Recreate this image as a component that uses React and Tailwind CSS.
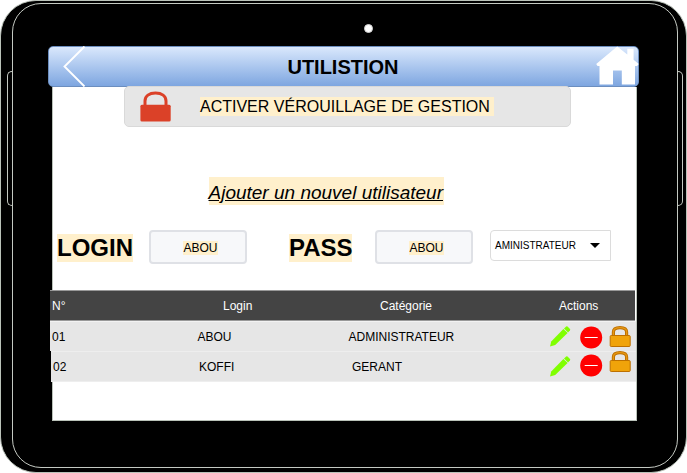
import React from "react";

function PadlockIcon() {
  return (
    <svg width="22" height="22" viewBox="0 0 22 22" className="block">
      <path d="M4.4 9V6C4.4 2.9 7 1.6 11 1.6S17.6 2.9 17.6 6V9" fill="none" stroke="#bd7000" strokeWidth="3.2" />
      <path d="M4.4 9V6.1C4.4 3 7 1.7 11 1.7S17.6 3 17.6 6.1V9" fill="none" stroke="#e69712" strokeWidth="1.3" />
      <rect x="1.2" y="9.5" width="20" height="11" rx="1" fill="#f0a30a" stroke="#bd7000" />
    </svg>
  );
}

function PencilIcon() {
  return (
    <svg width="21" height="21" viewBox="0 0 21 21" className="block" fill="#80ff00">
      <path d="M0 20.5 1.2 15.6 13.4 3 17.6 7 5.2 19Z" />
      <path d="M14 2.4 16.2 .4Q16.9 0 17.5 .5L20 3Q20.5 3.6 20 4.2L18.1 6.4Z" />
    </svg>
  );
}

function RemoveIcon() {
  return (
    <svg width="23" height="23" viewBox="0 0 23 23" className="block">
      <circle cx="11.2" cy="11.5" r="11" fill="#f00" />
      <path d="M4.7 11.5H17.7" stroke="#fff" />
    </svg>
  );
}

function Field({ className }) {
  return (
    <div className={"flex h-[34px] w-[98px] items-center justify-center rounded-[4px] border-2 border-[#dfe1e6] bg-[#f7f8fa] text-[12px] leading-[14px] " + className}>
      <span className="mt-px ml-[5px] bg-[#fff0cc]">ABOU</span>
    </div>
  );
}

function Header() {
  return (
    <header className="ml-[35px] flex h-[41px] w-[591px] shrink-0 items-center justify-between rounded-[5px] border border-[#6c8ebf] bg-linear-to-b from-[#dae8fc] to-[#7ea6e0]">
      <div className="-mt-px w-[60px] shrink-0">
        <svg width="40" height="41" viewBox="0 0 40 41" className="block">
          <path d="M35.5 .5 15.5 20.5 35.5 40.5" fill="none" stroke="#fff" strokeWidth="1.9" />
        </svg>
      </div>
      <h1 className="-ml-[2px] text-[20px] leading-[24px] font-bold">UTILISTION</h1>
      <div className="-mt-[2px] -mr-px flex w-[60px] justify-end">
        <svg width="43" height="39" viewBox="0 0 43 39" className="block" fill="#fff">
          <path d="M21.2 .4 31.3 8.6V2.8H37.6V13.8L42.7 17.9 41 20H39V38.5H25.8V24.5H17V38.5H3.5V20H1.6L.2 18.1Z" />
        </svg>
      </div>
    </header>
  );
}

function Banner() {
  return (
    <div className="-mt-px ml-[71px] flex h-[41px] w-[447px] items-center rounded-[5px] border border-[#d9d9d9] bg-[#e6e6e6]">
      <svg width="31" height="32" viewBox="0 0 31 32" className="ml-[15px] block shrink-0">
        <path d="M5 16V10C5 5 9.2 2 15.5 2S26 5 26 10V16" fill="none" stroke="#db4128" strokeWidth="3" />
        <rect x=".4" y="13.8" width="30.3" height="16.7" rx="1.5" fill="#db4128" />
      </svg>
      <span className="ml-[29px] h-[19px] bg-[#fff0cc] text-[16px] leading-[19px] whitespace-pre">ACTIVER VÉROUILLAGE DE GESTION </span>
    </div>
  );
}

function LoginForm() {
  return (
    <div className="mt-[25px] flex h-[35px] items-start">
      <label className="mt-1 ml-1 h-7 w-[76px] bg-[#fff0cc] text-[24px] leading-7 font-bold">LOGIN</label>
      <Field className="ml-4" />
      <label className="mt-1 ml-[42px] h-7 w-[63px] bg-[#fff0cc] text-[24px] leading-7 font-bold">PASS</label>
      <Field className="ml-[23px]" />
      <div className="ml-[17px] flex h-[31px] w-[121px] items-center rounded-l-[4px] border border-[#dcdcdc] pl-1 text-[10px]">
        <span className="w-[95px]">AMINISTRATEUR</span>
        <svg width="10" height="5" viewBox="0 0 10 5" className="block">
          <path d="M0 0H10L5 5Z" />
        </svg>
      </div>
    </div>
  );
}

function UserTable() {
  return (
    <div className="mt-[25px] text-[12px] whitespace-nowrap">
      <div className="-ml-[3px] flex h-[31px] w-[585px] items-center border-y border-[#999] bg-[#444] pl-[2px] text-white">
        <span className="w-[171px]">N°</span>
        <span className="w-[157px]">Login</span>
        <span className="w-[179px]">Catégorie</span>
        <span>Actions</span>
      </div>
      <div className="-ml-[3px] flex h-[30px] w-[586px] items-center border-t border-[#f2f2f2] bg-[#e6e6e6] pl-[2px]">
        <span className="w-[145.5px]">01</span>
        <span className="w-[151px]">ABOU</span>
        <span className="w-[201.5px]">ADMINISTRATEUR</span>
        <PencilIcon />
        <div className="mt-px ml-[9px]"><RemoveIcon /></div>
        <div className="ml-[6px]"><PadlockIcon /></div>
      </div>
      <div className="-ml-[2px] flex h-[31px] w-[585px] items-center border-y border-[#eee] bg-[#e6e6e6] pl-[2px]">
        <span className="w-[146px]">02</span>
        <span className="w-[153px]">KOFFI</span>
        <span className="w-[198px]">GERANT</span>
        <PencilIcon />
        <div className="mb-[2px] ml-[9px]"><RemoveIcon /></div>
        <div className="mb-[9px] ml-[6px]"><PadlockIcon /></div>
      </div>
    </div>
  );
}

export default function App() {
  return (
    <div className="h-[473px] w-[687px] bg-white font-['Liberation_Sans',Arial,sans-serif] text-black">
      <div className="flex h-[473px] w-[687px] overflow-hidden rounded-[36px] border border-[#bac2b9] bg-black pt-[2px]">
        <div className="mt-[68px] ml-[6px] h-[135px] w-[5px] shrink-0 rounded-l-[5px] border border-r-0 border-[#c4c9c2]" />
        <div className="flex h-[465px] w-[666px] shrink-0 flex-col rounded-[29px] border border-[#c4c9c2]">
          <div className="mt-5 ml-[351px] size-[9px] shrink-0 rounded-full border border-[#d0d0d0] bg-white" />
          <div className="h-[13px] shrink-0" />
          <Header />
          <main className="ml-[39px] h-[334px] w-[585px] shrink-0 border border-t-0 border-[#bac2b9] bg-white">
            <Banner />
            <h2 className="mt-[50px] ml-[155.5px] h-7 w-[235px] bg-[#fff0cc] text-[19px] leading-[31px] whitespace-nowrap italic underline">Ajouter un nouvel utilisateur</h2>
            <LoginForm />
            <UserTable />
          </main>
        </div>
        <div className="mt-[68px] h-[135px] w-[5px] shrink-0 rounded-r-[5px] border border-l-0 border-[#c4c9c2]" />
      </div>
    </div>
  );
}
